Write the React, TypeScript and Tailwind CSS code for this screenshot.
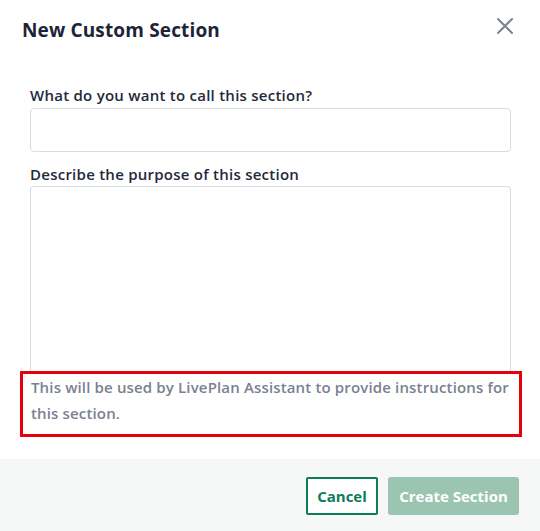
const App = () => {
  return (
    <div className="w-[540px] h-[531px] bg-white flex flex-col font-['Open_Sans','Noto_Sans',sans-serif]">
      <header className="h-[60px] flex flex-row items-center justify-between pl-[22px] pr-[26px] pt-[1px]">
        <h1 className="text-[19px] font-bold text-[#1c2537] tracking-[0.15px]">New Custom Section</h1>
        <button className="w-[18px] h-[18px] flex items-center justify-center text-[#7b8291] -mt-[10px]">
          <svg width="18" height="18" viewBox="0 0 18 18" fill="none" stroke="currentColor" strokeWidth="2" strokeLinecap="round">
            <path d="M2 2L16 16M16 2L2 16" />
          </svg>
        </button>
      </header>
      <div className="flex-1 flex flex-col px-[30px] pt-[25px]">
        <label className="text-[15px] font-semibold text-[#1f2a3b] leading-[20px] tracking-[0.25px]">
          What do you want to call this section?
        </label>
        <input className="mt-[3px] h-[44px] w-[481px] rounded-[4px] border border-[#d9dce1] outline-none" />
        <label className="mt-[12px] text-[15px] font-semibold text-[#1f2a3b] leading-[20px] tracking-[0.25px]">
          Describe the purpose of this section
        </label>
        <textarea className="mt-[2px] h-[185px] w-[481px] rounded-t-[4px] border border-[#d9dce1] border-b-0 resize-none outline-none" />
        <div className="-mx-[10px] w-[502px] border-[3px] border-[#e5000b] pl-[8px] pr-[4px] pb-[8px]">
          <p className="text-[15px] font-semibold text-[#7a8191] leading-[26px] tracking-[0.15px]">
            This will be used by LivePlan Assistant to provide instructions for this section.
          </p>
        </div>
      </div>
      <footer className="h-[72px] bg-[#f6f8f8] flex flex-row items-center justify-end gap-[10px] pr-[21px] pt-[2px]">
        <button className="h-[38px] w-[72px] border-2 border-[#0d7d57] rounded-[2px] bg-white text-[15px] font-bold text-[#0d7d57]">
          Cancel
        </button>
        <button className="h-[38px] w-[131px] rounded-[3px] bg-[#9bc5b1] text-[15px] font-bold text-white">
          Create Section
        </button>
      </footer>
    </div>
  );
};

export default App;
